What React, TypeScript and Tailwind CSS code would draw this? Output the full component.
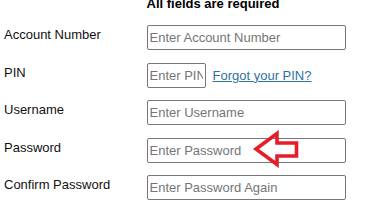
import React from "react";

const inputCls =
  "h-[25px] border border-[#767676] rounded-[2px] px-[2px] py-0 text-[13px] leading-[15px] text-black bg-white placeholder:text-[#757575] outline-none";

const Row = ({ label, children }: { label: string; children: React.ReactNode }) => (
  <div className="flex items-start h-[37.5px]">
    <label className="w-[146.5px] pl-[4px] pt-[2px] shrink-0 leading-[15px]">{label}</label>
    {children}
  </div>
);

const Arrow = () => (
  <svg
    className="absolute left-[104.5px] top-[-8px]"
    width="48"
    height="38"
    viewBox="0 0 48 38"
    aria-hidden="true"
  >
    <polygon
      points="5,19 26,3.5 26,13 45.5,13 45.5,26 26,26 26,34.5"
      fill="none"
      stroke="#e31e2a"
      strokeWidth="3.6"
      strokeLinejoin="miter"
    />
  </svg>
);

export default function App() {
  return (
    <div className="w-[386px] h-[204px] overflow-hidden bg-white text-[13px] text-[#111] font-['Liberation_Sans',Arial,sans-serif]">
      <div className="h-[29.5px] -mt-[4.5px] pl-[146.5px] font-bold leading-[15px] text-black">
        All fields are required
      </div>
      <form className="flex flex-col">
        <Row label="Account Number">
          <input className={`${inputCls} w-[199px]`} placeholder="Enter Account Number" />
        </Row>
        <Row label="PIN">
          <div className="flex items-baseline gap-[7px]">
            <input className={`${inputCls} w-[59px]`} placeholder="Enter PIN" />
            <a href="#" className="text-[#30729f] underline leading-[15px]">
              Forgot your PIN?
            </a>
          </div>
        </Row>
        <Row label="Username">
          <input className={`${inputCls} w-[199px]`} placeholder="Enter Username" />
        </Row>
        <Row label="Password">
          <div className="relative">
            <input type="password" className={`${inputCls} w-[199px]`} placeholder="Enter Password" />
            <Arrow />
          </div>
        </Row>
        <Row label="Confirm Password">
          <input type="password" className={`${inputCls} w-[199px]`} placeholder="Enter Password Again" />
        </Row>
      </form>
    </div>
  );
}
